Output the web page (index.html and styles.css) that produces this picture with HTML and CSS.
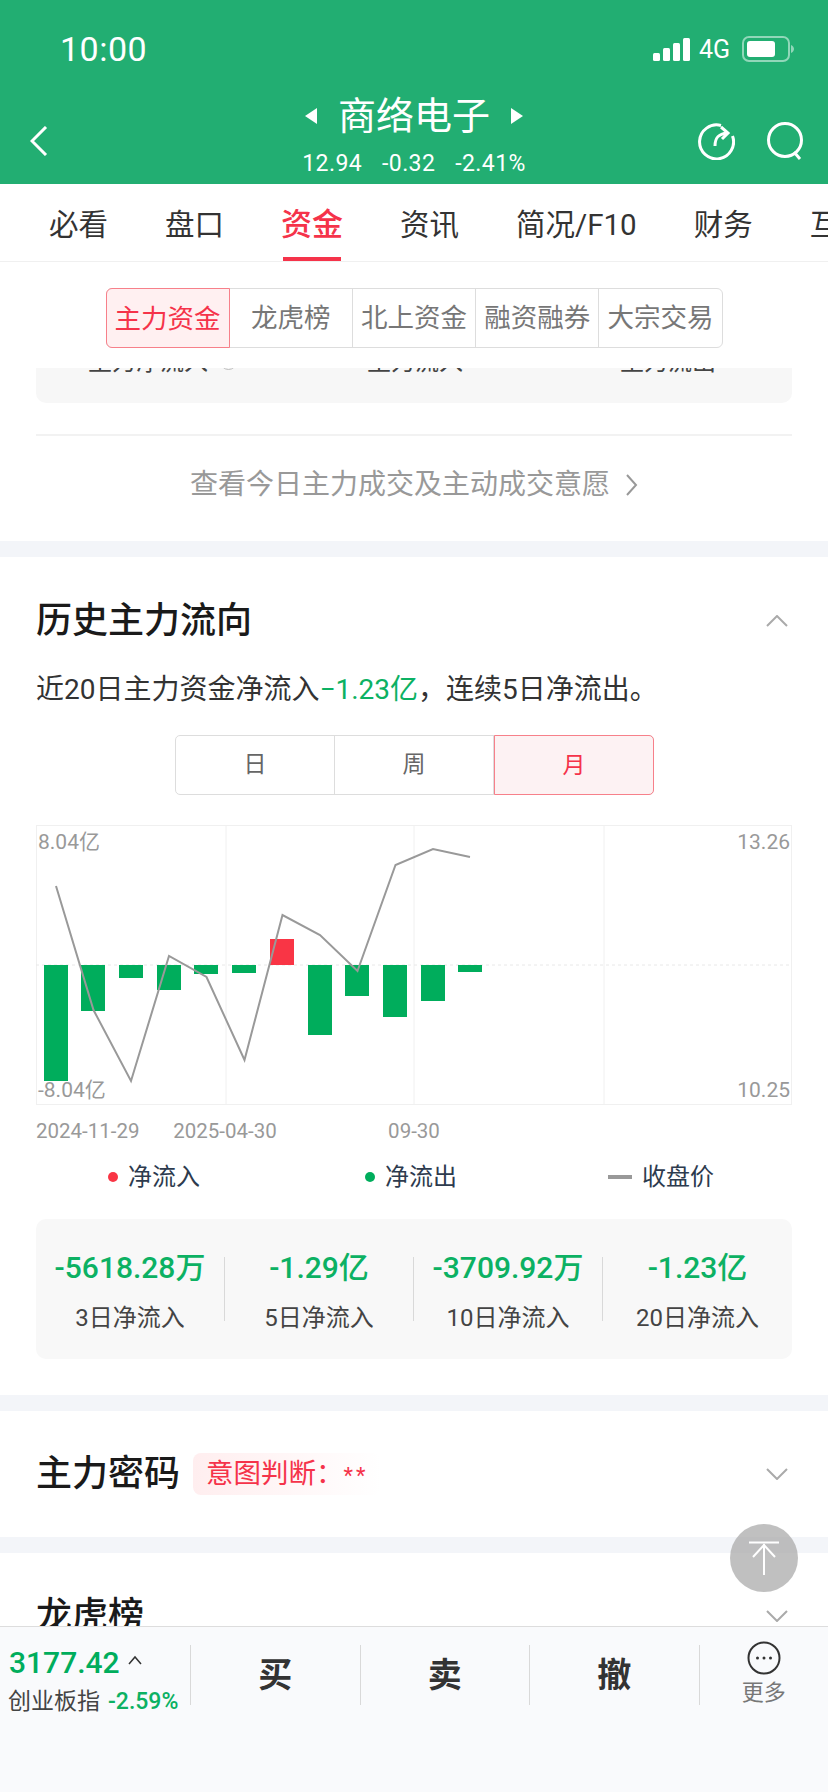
FILE: index.html
```html
<!DOCTYPE html>
<html lang="zh-CN">
<head>
    <meta charset="UTF-8">
    <meta name="viewport" content="width=device-width, initial-scale=1.0">
    <title>商络电子</title>
    <link rel="stylesheet" href="styles.css">
</head>
<body>
<div class="page">
    <div class="header">
        <div class="status">
            <span class="time">10:00</span>
            <div class="status-right">
                <svg class="signal" viewBox="0 0 37 23"><rect x="0" y="15" width="7" height="8" rx="1.5"/><rect x="10" y="10" width="7" height="13" rx="1.5"/><rect x="20" y="5" width="7" height="18" rx="1.5"/><rect x="30" y="0" width="7" height="23" rx="1.5"/></svg>
                <span class="net">4G</span>
                <svg class="battery" viewBox="0 0 53 26"><rect x="1" y="1" width="46" height="24" rx="6" fill="none" stroke="#fff" stroke-opacity=".5" stroke-width="2"/><rect x="5" y="5" width="28" height="16" rx="3" fill="#fff"/><path d="M49 9c2 1 3 2.500 3 4s-1 3-3 4z" fill="#fff" fill-opacity=".5"/></svg>
            </div>
        </div>
        <div class="nav">
            <svg class="back" viewBox="0 0 18 30"><path d="M16 1 2 15l14 14" fill="none" stroke="#fff" stroke-width="3"/></svg>
            <div class="stock">
                <div class="stock-name">
                    <svg class="tri" viewBox="0 0 12 16"><path d="M12 0v16L0 8z" fill="#fff"/></svg>
                    <span>商络电子</span>
                    <svg class="tri" viewBox="0 0 12 16"><path d="M0 0v16l12-8z" fill="#fff"/></svg>
                </div>
                <div class="stock-price"><span>12.94</span><span>-0.32</span><span>-2.41%</span></div>
            </div>
            <svg class="nav-icon refresh" viewBox="0 0 38 38"><path d="M24 3.500A17 17 0 1 0 35.500 14" fill="none" stroke="#fff" stroke-width="3"/><path d="M18 24c0-8 3-12 12-13M24 5l7 6-6 6" fill="none" stroke="#fff" stroke-width="3"/></svg>
            <svg class="nav-icon search" viewBox="0 0 38 38"><circle cx="19" cy="18" r="16.500" fill="none" stroke="#fff" stroke-width="3"/><path d="m28 30 6 7" fill="none" stroke="#fff" stroke-width="3"/></svg>
        </div>
    </div>

    <div class="tabs">
        <span>必看</span>
        <span>盘口</span>
        <span class="tab-on">资金</span>
        <span>资讯</span>
        <span>简况/F10</span>
        <span>财务</span>
        <span>互动</span>
    </div>

    <div class="content">
        <div class="seg-wrap">
            <div class="seg">
                <span class="seg-on">主力资金</span>
                <span>龙虎榜</span>
                <span>北上资金</span>
                <span>融资融券</span>
                <span>大宗交易</span>
            </div>
        </div>

        <div class="clip-card">
            <div class="clip-row">
                <span>主力净流入<i class="info"></i></span>
                <span>主力流入</span>
                <span>主力流出</span>
            </div>
        </div>
        <div class="rule"></div>
        <div class="more-link">查看今日主力成交及主动成交意愿
            <svg class="link-arrow" viewBox="0 0 13 22"><path d="m2 1 9 10-9 10" fill="none" stroke="#999" stroke-width="2"/></svg>
        </div>

        <div class="gap"></div>

        <div class="section">
            <div class="sec-head">
                <h2>历史主力流向</h2>
                <svg class="fold" viewBox="0 0 22 12"><path d="M1 11 11 1l10 10" fill="none" stroke="#aaa" stroke-width="2"/></svg>
            </div>
            <p class="desc">近20日主力资金净流入<span class="green">−1.23亿</span>，连续5日净流出。</p>
            <div class="period">
                <span>日</span>
                <span>周</span>
                <span class="period-on">月</span>
            </div>

            <svg class="chart" viewBox="36 825 756 320">
                <rect class="grid" x="36.500" y="825.500" width="755" height="279"/>
                <path class="grid" d="M226 825v280M414 825v280M604 825v280"/>
                <path class="zero" d="M36 965h756"/>
                <g class="bar-down">
                    <rect x="44" y="965" width="24" height="116"/>
                    <rect x="81" y="965" width="24" height="46"/>
                    <rect x="119" y="965" width="24" height="13"/>
                    <rect x="157" y="965" width="24" height="25"/>
                    <rect x="194" y="965" width="24" height="9"/>
                    <rect x="232" y="965" width="24" height="8"/>
                    <rect x="308" y="965" width="24" height="70"/>
                    <rect x="345" y="965" width="24" height="31"/>
                    <rect x="383" y="965" width="24" height="52"/>
                    <rect x="421" y="965" width="24" height="36"/>
                    <rect x="458" y="965" width="24" height="7"/>
                </g>
                <rect class="bar-up" x="270" y="939" width="24" height="26"/>
                <polyline class="price-line" points="56,886 93.500,1010 131,1081 169,956 206.500,977 244.500,1060 282.500,915 320,935 357.500,971 395.500,865 433,849 470,857"/>
                <text class="axis" x="38" y="849">8.04亿</text>
                <text class="axis" x="38" y="1097">-8.04亿</text>
                <text class="axis end" x="790" y="849">13.26</text>
                <text class="axis end" x="790" y="1097">10.25</text>
                <text class="date" x="36" y="1138">2024-11-29</text>
                <text class="date mid" x="225" y="1138">2025-04-30</text>
                <text class="date mid" x="414" y="1138">09-30</text>
            </svg>

            <div class="legend">
                <span class="leg leg-a"><i class="dot dot-red"></i>净流入</span>
                <span class="leg leg-b"><i class="dot dot-green"></i>净流出</span>
                <span class="leg leg-c"><i class="dash"></i>收盘价</span>
            </div>

            <div class="summary">
                <div class="sum-item"><b>-5618.28万</b><span>3日净流入</span></div>
                <div class="sum-item"><b>-1.29亿</b><span>5日净流入</span></div>
                <div class="sum-item"><b>-3709.92万</b><span>10日净流入</span></div>
                <div class="sum-item"><b>-1.23亿</b><span>20日净流入</span></div>
            </div>
        </div>

        <div class="gap"></div>

        <div class="row-sec">
            <h2>主力密码</h2>
            <span class="tag">意图判断：<em>**</em></span>
            <svg class="fold" viewBox="0 0 22 12"><path d="M1 1l10 10L21 1" fill="none" stroke="#aaa" stroke-width="2"/></svg>
        </div>

        <div class="gap"></div>

        <div class="row-last">
            <h2>龙虎榜</h2>
            <svg class="fold" viewBox="0 0 22 12"><path d="M1 1l10 10L21 1" fill="none" stroke="#aaa" stroke-width="2"/></svg>
        </div>
    </div>

    <div class="to-top">
        <svg viewBox="0 0 30 34"><path d="M0 1.500h30M15 34V3M4 16 15 4l11 12" fill="none" stroke="#fff" stroke-width="2"/></svg>
    </div>

    <div class="footer">
        <div class="index">
            <div class="index-top"><span class="index-num">3177.42</span><svg class="caret" viewBox="0 0 14 10"><path d="M1 9l6-7 6 7" fill="none" stroke="#333" stroke-width="1.500"/></svg></div>
            <div class="index-bot"><span>创业板指</span><span class="index-pct">-2.59%</span></div>
        </div>
        <div class="act">买</div>
        <div class="act">卖</div>
        <div class="act">撤</div>
        <div class="foot-more">
            <svg viewBox="0 0 34 34"><circle cx="17" cy="17" r="15.500" fill="none" stroke="#333" stroke-width="2"/><circle cx="10.500" cy="17" r="1.500" fill="#333"/><circle cx="17" cy="17" r="1.500" fill="#333"/><circle cx="23.500" cy="17" r="1.500" fill="#333"/></svg>
            <span>更多</span>
        </div>
    </div>
</div>
</body>
</html>
```

FILE: styles.css
```css
*{
    margin:0;
    padding:0;
    box-sizing:border-box;
}
body{
    width:828px;
    height:1792px;
    overflow:hidden;
    background:#fff;
    font-family:Roboto, "Noto Sans CJK SC", sans-serif;
    color:#333;
}
.page{
    position:relative;
    width:828px;
    height:1792px;
    display:flex;
    flex-direction:column;
    overflow:hidden;
}

/* header */
.header{
    height:184px;
    background:#22ae72;
    color:#fff;
    flex:none;
}
.status{
    height:96px;
    padding:29px 33px 0 60px;
    display:flex;
    justify-content:space-between;
    align-items:flex-start;
}
.time{
    font-size:34px;
    line-height:40px;
    letter-spacing:.5px;
}
.status-right{
    display:flex;
    align-items:center;
    height:40px;
}
.signal{
    width:37px;
    height:23px;
    fill:#fff;
    margin-right:9px;
}
.net{
    font-size:25px;
    width:33px;
    margin-right:10px;
}
.battery{
    width:53px;
    height:26px;
}
.nav{
    height:88px;
    position:relative;
    display:flex;
    justify-content:center;
}
.back{
    position:absolute;
    left:30px;
    top:30px;
    width:18px;
    height:30px;
}
.nav-icon{
    position:absolute;
    top:26px;
    width:38px;
    height:38px;
}
.refresh{
    left:697px;
}
.search{
    left:766px;
}
.stock{
    display:flex;
    flex-direction:column;
    align-items:center;
}
.stock-name{
    display:flex;
    align-items:center;
    gap:21px;
    height:44px;
    margin-top:-2px;
    font-size:38px;
    line-height:44px;
}
.tri{
    width:12px;
    height:16px;
}
.stock-price{
    display:flex;
    gap:20px;
    margin-top:12px;
    font-size:23px;
    line-height:28px;
    letter-spacing:.4px;
}

/* tabs */
.tabs{
    height:78px;
    flex:none;
    display:flex;
    gap:57px;
    padding:4px 0 0 49px;
    font-size:29.500px;
    line-height:74px;
    color:#333;
    white-space:nowrap;
    overflow:hidden;
    border-bottom:1px solid #f0f0f0;
}
.tab-on{
    position:relative;
    font-size:31px;
    font-weight:500;
    color:#f5334a;
}
.tab-on::after{
    content:"";
    position:absolute;
    left:2px;
    right:2px;
    bottom:-1px;
    height:5px;
    background:#f5334a;
}

/* content */
.content{
    flex:1;
    overflow:hidden;
}
.seg-wrap{
    height:106px;
    padding-top:26px;
    display:flex;
    justify-content:center;
}
.seg{
    width:617px;
    height:60px;
    display:flex;
    border:1px solid #ddd;
    border-radius:6px;
    font-size:26.500px;
    line-height:58px;
    color:#777;
    text-align:center;
}
.seg span{
    flex:1;
    border-right:1px solid #ddd;
    white-space:nowrap;
}
.seg span:last-child{
    border-right:none;
}
.seg .seg-on{
    margin:-1px 0 -1px -1px;
    line-height:60px;
    color:#f5334a;
    background:#fff0f1;
    border:1px solid #f7808a;
    border-radius:6px 0 0 6px;
}
.clip-card{
    height:35px;
    margin:0 36px;
    background:#f7f7f7;
    border-radius:0 0 10px 10px;
    overflow:hidden;
}
.clip-row{
    display:flex;
    margin-top:-23px;
    font-size:24px;
    line-height:34px;
    color:#444;
}
.clip-row span{
    white-space:nowrap;
}
.clip-row span:nth-child(1){
    margin-left:52px;
    width:279px;
}
.clip-row span:nth-child(2){
    width:253px;
}
.info{
    display:inline-block;
    width:17px;
    height:17px;
    margin-left:12px;
    border:1px solid #bbb;
    border-radius:50%;
}
.rule{
    height:2px;
    margin:31px 36px 0;
    background:#f2f2f2;
}
.more-link{
    height:105px;
    padding:24px 0 0;
    display:flex;
    align-items:flex-start;
    justify-content:center;
    gap:15px;
    font-size:28px;
    line-height:50px;
    color:#999;
}
.link-arrow{
    width:13px;
    height:22px;
    margin-top:14px;
}
.gap{
    height:16px;
    background:#f3f5f9;
}

/* history */
.section{
    padding:39px 36px 36px;
}
.sec-head{
    display:flex;
    justify-content:space-between;
    align-items:center;
    height:50px;
    margin-bottom:24px;
}
h2{
    font-size:36px;
    line-height:50px;
    font-weight:500;
    color:#1a1a1a;
}
.fold{
    width:22px;
    height:12px;
    margin-right:4px;
    flex:none;
}
.desc{
    font-size:28px;
    line-height:40px;
    color:#333;
    white-space:nowrap;
}
.green{
    color:#0cb163;
}
.period{
    width:479px;
    height:60px;
    margin:25px 0 0 139px;
    display:flex;
    border:1px solid #ddd;
    border-radius:5px;
    font-size:23px;
    line-height:58px;
    color:#666;
    text-align:center;
}
.period span{
    flex:1;
    border-right:1px solid #ddd;
}
.period .period-on{
    margin:-1px -1px -1px 0;
    line-height:60px;
    color:#f5334a;
    background:#fdf2f3;
    border:1px solid #f7808a;
    border-radius:0 5px 5px 0;
}
.chart{
    display:block;
    width:756px;
    height:320px;
    margin-top:30px;
}
.grid{
    fill:none;
    stroke:#f0f0f0;
    stroke-width:1;
}
.zero{
    stroke:#e8e8e8;
    stroke-dasharray:3 3;
    stroke-width:1;
}
.bar-down{
    fill:#00ad5c;
}
.bar-up{
    fill:#f93545;
}
.price-line{
    fill:none;
    stroke:#999;
    stroke-width:2;
}
.axis{
    font-size:21px;
    fill:#999;
}
.date{
    font-size:20.500px;
    fill:#999;
}
.end{
    text-anchor:end;
}
.mid{
    text-anchor:middle;
}
.legend{
    display:flex;
    height:40px;
    margin-top:12px;
    font-size:24px;
    line-height:40px;
    color:#2d3b4e;
}
.leg{
    display:flex;
    align-items:center;
}
.leg-a{
    margin-left:72px;
    width:257px;
}
.leg-b{
    width:243px;
}
.dot{
    width:10px;
    height:10px;
    border-radius:50%;
    margin-right:10px;
}
.dot-red{
    background:#f93545;
}
.dot-green{
    background:#00ad5c;
}
.dash{
    width:24px;
    height:4px;
    background:#999;
    margin-right:10px;
}
.summary{
    height:140px;
    margin-top:22px;
    padding-top:38px;
    display:flex;
    background:#f8f8f8;
    border-radius:10px;
}
.sum-item{
    width:189px;
    height:64px;
    display:flex;
    flex-direction:column;
    align-items:center;
    border-right:1px solid #d9d9d9;
    white-space:nowrap;
}
.sum-item:last-child{
    border-right:none;
}
.sum-item b{
    height:22px;
    font-size:30px;
    line-height:22px;
    font-weight:500;
    color:#0cb163;
}
.sum-item span{
    margin-top:23px;
    font-size:24px;
    line-height:32px;
    color:#444;
}

/* folded sections */
.row-sec{
    height:126px;
    padding:0 36px;
    display:flex;
    align-items:center;
}
.tag{
    margin-left:13px;
    width:188px;
    height:42px;
    padding-left:13px;
    border-radius:8px;
    font-size:27.500px;
    line-height:42px;
    color:#f5334a;
    background:linear-gradient(to right, #ffeeef, #fff);
    white-space:nowrap;
}
.tag em{
    font-style:normal;
    font-size:22px;
    letter-spacing:3px;
}
.row-sec .fold{
    margin-left:auto;
}
.row-last{
    padding:38px 36px 0;
    display:flex;
    justify-content:space-between;
    align-items:center;
}

/* float button */
.to-top{
    position:absolute;
    left:730px;
    top:1524px;
    width:68px;
    height:68px;
    border-radius:50%;
    background:rgba(165,165,165,.7);
    display:flex;
    align-items:center;
    justify-content:center;
}
.to-top svg{
    width:30px;
    height:34px;
}

/* footer */
.footer{
    height:166px;
    flex:none;
    display:flex;
    background:#f9fafc;
    border-top:1px solid #ddd;
    padding-top:18px;
}
.index{
    width:191px;
    height:60px;
    padding-left:9px;
    border-right:1px solid #d9d9d9;
    white-space:nowrap;
}
.index-top{
    display:flex;
    align-items:center;
    height:36px;
}
.index-num{
    font-size:30px;
    line-height:36px;
    font-weight:500;
    color:#00ad5c;
}
.caret{
    width:14px;
    height:10px;
    margin:0 0 6px 8px;
}
.index-bot{
    display:flex;
    align-items:center;
    gap:8px;
    margin:5px 0 0 -1px;
    font-size:23px;
    line-height:32px;
    color:#444;
}
.index-pct{
    font-weight:500;
    color:#0cb163;
}
.act{
    width:169.500px;
    height:60px;
    border-right:1px solid #d9d9d9;
    font-size:34px;
    font-weight:700;
    line-height:60px;
    text-align:center;
    color:#333;
}
.foot-more{
    flex:1;
    display:flex;
    flex-direction:column;
    align-items:center;
    margin-top:-4px;
}
.foot-more svg{
    width:34px;
    height:34px;
}
.foot-more span{
    margin-top:4px;
    font-size:22px;
    line-height:28px;
    color:#777;
}
```
